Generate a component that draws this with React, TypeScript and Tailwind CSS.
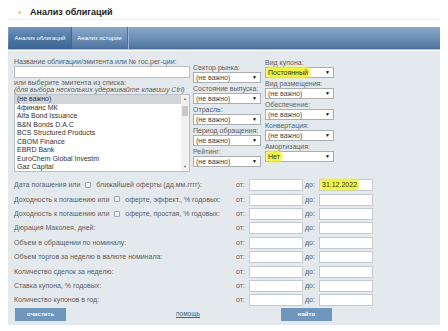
import React from "react";

function Hl({ children }: { children: React.ReactNode }) {
  return (
    <span className="bg-[#f3f33c] shadow-[0_0_2px_2px_#f3f33c] rounded-[2px] text-[#333]">
      {children}
    </span>
  );
}

function Sel({ value, hl }: { value: string; hl?: boolean }) {
  return (
    <div className="h-[11px] bg-white border border-[#a9aeb3] flex items-center justify-between pl-[2px] pr-[3px] text-[7px] leading-[9px] text-[#444]">
      <span>{hl ? <Hl>{value}</Hl> : value}</span>
      <span className="text-[5px] text-black leading-none">▼</span>
    </div>
  );
}

function Group({ label, value, hl }: { label: string; value: string; hl?: boolean }) {
  return (
    <div className="mb-[2px]">
      <div className="text-[7px] leading-[8px] whitespace-nowrap">{label}</div>
      <Sel value={value} hl={hl} />
    </div>
  );
}

function Cb() {
  return (
    <span className="inline-block align-middle w-[6px] h-[6px] border border-[#9aa6b2] bg-[#eef1f5] rounded-[1px] mx-[5px] -mt-[1px]" />
  );
}

function Row({ label, from, to }: { label: React.ReactNode; from?: React.ReactNode; to?: React.ReactNode }) {
  return (
    <div className="h-[14.4px] flex items-center">
      <div className="w-[222px] text-[7px] leading-[8px] whitespace-nowrap">{label}</div>
      <div className="w-[13px] text-[7px] leading-[8px]">от:</div>
      <div className="w-[54px] h-[12px] bg-white border border-[#c3cad1] text-[7px] leading-[10px] pl-[2px]">{from}</div>
      <div className="w-[16px] pl-[2px] text-[7px] leading-[8px]">до:</div>
      <div className="w-[54px] h-[12px] bg-white border border-[#c3cad1] text-[7px] leading-[10px] pl-[2px]">{to}</div>
    </div>
  );
}

const items = [
  "(не важно)",
  "4финанс МК",
  "Alfa Bond Issuance",
  "B&N Bonds D.A.C",
  "BCS Structured Products",
  "CBOM Finance",
  "EBRD Bank",
  "EuroChem Global Investm",
  "Gaz Capital",
];

export default function App() {
  return (
    <div className="w-[448px] h-[331px] bg-white overflow-hidden text-[#606060] font-['Liberation_Sans',Arial,sans-serif]">
      <div className="h-[19px] pl-[18px] pt-[7px] flex items-start">
        <span className="w-[3px] h-[3px] rounded-full bg-[#e9cf6a] mt-[4px]" />
        <span className="ml-[9px] text-[9px] leading-[10px] font-bold text-[#222]">Анализ облигаций</span>
      </div>
      <div className="mx-[8px] border-t border-dotted border-[#dfe4e8]" />
      <div className="mx-[8px] mt-[7px] h-[23px] flex bg-[linear-gradient(180deg,#8aa9c9,#6a8db4_55%,#4b719c)] border-b border-[#a9c1d8]">
        <div className="ml-[1px] w-[63px] flex items-center justify-center bg-[linear-gradient(180deg,#6f94bd,#4d76a3_55%,#3d6592)] text-white text-[6px] border-r border-[#3f6590]">
          Анализ облигаций
        </div>
        <div className="w-[56px] flex items-center justify-center text-white text-[6px] border-r border-[#4b6f98] shadow-[1px_0_0_#9ab4ce]">
          Анализ истории
        </div>
      </div>
      <div className="mx-[8px] mt-[1px] h-[274px] bg-[#e4e9ed] px-[6px] pt-[7px]">
        <div className="flex items-start">
          <div className="w-[176px]">
            <div className="text-[7px] leading-[8px] whitespace-nowrap">Название облигации/эмитента или № гос.рег-ции:</div>
            <div className="h-[12px] bg-white border border-[#b8bfc6]" />
            <div className="mt-[1px] text-[7px] leading-[7px] whitespace-nowrap">или выберите эмитента из списка:</div>
            <div className="text-[7px] leading-[7px] italic whitespace-nowrap">(для выбора нескольких удерживайте клавишу Ctrl)</div>
            <div className="mt-[1px] h-[78px] bg-white border border-[#b8bfc6] flex overflow-hidden">
              <div className="flex-1 text-[7px] leading-[8.5px] text-[#333]">
                {items.map((t, i) => (
                  <div key={t} className={"pl-[2px] whitespace-nowrap " + (i === 0 ? "bg-[#d2d5d8]" : "")}>
                    {t}
                  </div>
                ))}
              </div>
              <div className="w-[8px] bg-[#f1f1f1] flex flex-col items-center">
                <div className="h-[8px] text-[4px] leading-[8px] text-[#777]">▲</div>
                <div className="mt-[3px] w-[6px] h-[10px] bg-[#c9c9c9]" />
                <div className="flex-1" />
                <div className="h-[8px] text-[4px] leading-[8px] text-[#777]">▼</div>
              </div>
            </div>
          </div>
          <div className="ml-[3px] w-[68px] mt-[6px]">
            <Group label="Сектор рынка:" value="(не важно)" />
            <Group label="Состояние выпуска:" value="(не важно)" />
            <Group label="Отрасль:" value="(не важно)" />
            <Group label="Период обращения:" value="(не важно)" />
            <Group label="Рейтинг:" value="(не важно)" />
          </div>
          <div className="ml-[4px] w-[69px] mt-[1px]">
            <Group label="Вид купона:" value="Постоянный" hl />
            <Group label="Вид размещения:" value="(не важно)" />
            <Group label="Обеспечение:" value="(не важно)" />
            <Group label="Конвертация:" value="(не важно)" />
            <Group label="Амортизация:" value="Нет" hl />
          </div>
        </div>
        <div className="mt-[6px]">
          <Row
            label={<>Дата погашения или<Cb />ближайшей оферты (дд.мм.гггг):</>}
            to={<Hl>31.12.2022</Hl>}
          />
          <Row label={<>Доходность к погашению или<Cb />оферте, эффект., % годовых:</>} />
          <Row label={<>Доходность к погашению или<Cb />оферте, простая, % годовых:</>} />
          <Row label="Дюрация Маколея, дней:" />
          <Row label="Объем в обращении по номиналу:" />
          <Row label="Объем торгов за неделю в валюте номинала:" />
          <Row label="Количество сделок за неделю:" />
          <Row label="Ставка купона, % годовых:" />
          <Row label="Количество купонов в год:" />
        </div>
        <div className="h-[13px] flex items-center">
          <div className="ml-[1px] w-[51px] h-[13px] bg-[#6f96bd] text-white text-[6px] font-bold flex items-center justify-center">
            очистить
          </div>
          <div className="ml-[109px] w-[26px] text-center text-[6.5px] text-[#3d5f86] underline">помощь</div>
          <div className="ml-[80px] w-[51px] h-[13px] bg-[#6f96bd] text-white text-[6px] font-bold flex items-center justify-center">
            найти
          </div>
        </div>
      </div>
    </div>
  );
}
